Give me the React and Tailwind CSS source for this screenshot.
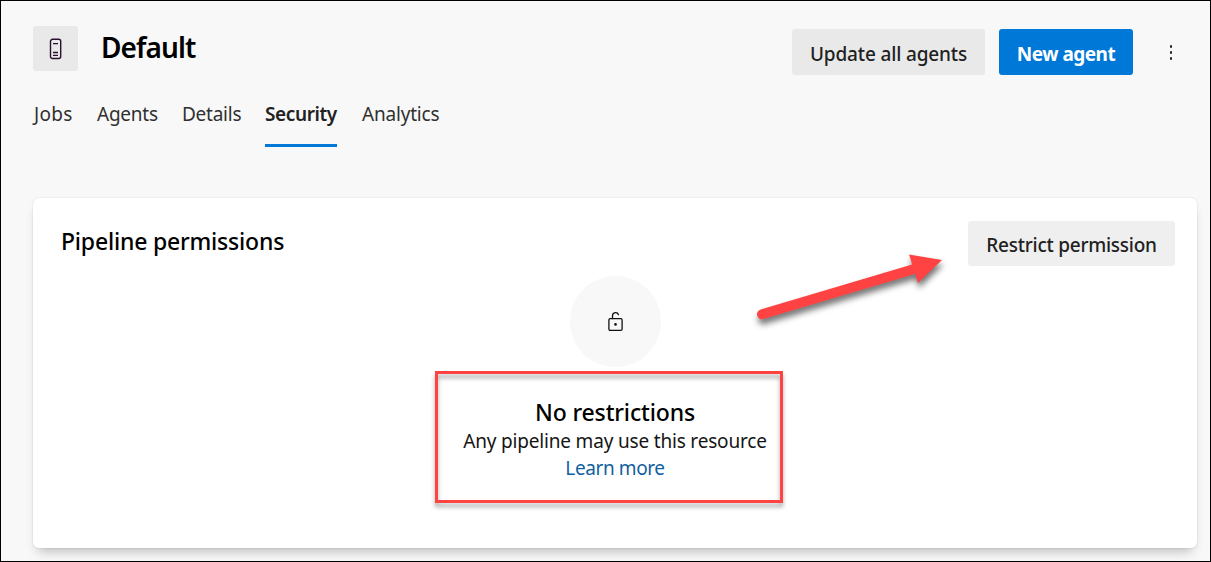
import React from 'react';

const tabs = [
  { label: 'Jobs', box: 'w-[39px] mr-[25px] tracking-[0.3px] pl-px' },
  { label: 'Agents', box: 'w-[61px] mr-[24px] tracking-[-0.25px]' },
  { label: 'Details', box: 'w-[59px] mr-[24px] tracking-[-0.25px]' },
  { label: 'Security', box: 'w-[72px] mr-[25px] tracking-[-0.4px]', active: true },
  { label: 'Analytics', box: 'w-[78px] tracking-[-0.2px]' },
];

function PoolIcon() {
  return (
    <svg width="13" height="22" viewBox="0 0 13 22" fill="none" stroke="#2b1030" strokeWidth="1.4">
      <rect x="1.5" y="1.3" width="10.2" height="19.2" rx="2" />
      <path d="M4 5.7h5M4 14.5h5M4 17.4h5" strokeWidth="1.3" />
    </svg>
  );
}

function UnlockIcon() {
  return (
    <svg width="17" height="23" viewBox="0 0 17 23" fill="none" stroke="#111" strokeWidth="1.3">
      <rect x="1.9" y="8.7" width="13.2" height="11.6" rx="1.2" />
      <path d="M5.5 8.5V5.6a3.1 3.1 0 0 1 6-.9" strokeLinecap="round" />
      <circle cx="8.5" cy="14.4" r="1.3" fill="#111" stroke="none" />
    </svg>
  );
}

export default function App() {
  return (
    <div className="relative flex h-[562px] w-[1211px] flex-col overflow-hidden border border-black bg-[#f8f8f8] pl-8 font-['Noto_Sans','Open_Sans',sans-serif] whitespace-nowrap text-[#212121]">
      <header className="mt-[25px] flex h-[49px]">
        <div className="flex size-[45px] items-center justify-center rounded-[3px] bg-[#e9e9e9]">
          <PoolIcon />
        </div>
        <h1 className="ml-[23px] h-[45px] w-[691px] text-[28px] leading-[43px] font-semibold tracking-[-0.9px] text-black">Default</h1>
        <div className="mt-[3px] flex h-[46px]">
          <button className="flex h-[46px] w-[193px] items-center justify-center rounded-[3px] bg-[#e9e9e9] pt-1 text-[19px] font-medium tracking-[-0.15px]">Update all agents</button>
          <button className="ml-[14px] flex h-[46px] w-[134px] items-center justify-center rounded-[3px] bg-[#0078d7] pt-1 text-[19px] font-bold tracking-[-0.5px] text-white">New agent</button>
          <button className="ml-[32px] mt-[15px] flex h-[17px] w-3 flex-col items-center justify-between py-[1px]" aria-label="More actions">
            <span className="size-[2.8px] rounded-full bg-[#222]" />
            <span className="size-[2.8px] rounded-full bg-[#222]" />
            <span className="size-[2.8px] rounded-full bg-[#222]" />
          </button>
        </div>
      </header>

      <nav className="mt-[21px] flex h-[51px]">
        {tabs.map((t) => (
          <a
            key={t.label}
            className={`${t.box} h-[51px] text-[19px] leading-[36px] ${t.active ? 'border-b-3 border-[#0078d7] font-semibold' : 'text-[#303030]'}`}
          >
            {t.label}
          </a>
        ))}
      </nav>

      <section className="mt-[51px] h-[350px] w-[1164px] rounded-[6px] bg-white shadow-[0_0_2px_rgba(0,0,0,0.14),0_8px_12px_-5px_rgba(0,0,0,0.26)]">
        <div className="flex h-[77px] justify-between pt-[23px] pr-[22px] pl-[28px]">
          <h2 className="text-[23px] leading-[41px] font-medium tracking-[-0.2px] text-black">Pipeline permissions</h2>
          <button className="flex h-[45px] w-[207px] items-center justify-center rounded-[3px] bg-[#efefef] pt-1 text-[19px] font-medium tracking-[-0.25px]">Restrict permission</button>
        </div>
        <div className="flex flex-col items-center pt-[1px]">
          <div className="flex size-[91px] items-center justify-center rounded-full bg-[#f8f8f8]">
            <UnlockIcon />
          </div>
          <h3 className="mt-[30px] h-[31px] text-[23px] leading-[31px] font-medium tracking-[-0.15px] text-black">No restrictions</h3>
          <p className="h-[27px] text-[19px] leading-[27px] tracking-[-0.18px] text-[#151515]">Any pipeline may use this resource</p>
          <a className="h-[27px] text-[19px] leading-[27px] tracking-[-0.4px] text-[#105f9f]">Learn more</a>
        </div>
      </section>

      <div className="absolute top-[370px] left-[434px] h-[132px] w-[348px] border-3 border-[#ff4343] [filter:drop-shadow(0px_4px_2px_rgba(0,0,0,0.35))]" />
      <svg className="absolute top-[239px] left-[739px] [filter:drop-shadow(1px_5px_3px_rgba(0,0,0,0.55))]" width="220" height="100" viewBox="740 240 220 100">
        <path d="M762 314.3L916 268.5" stroke="#ff4343" strokeWidth="10" strokeLinecap="round" />
        <path d="M909 254.5L942 260L918 283Z" fill="#ff4343" />
      </svg>
    </div>
  );
}
